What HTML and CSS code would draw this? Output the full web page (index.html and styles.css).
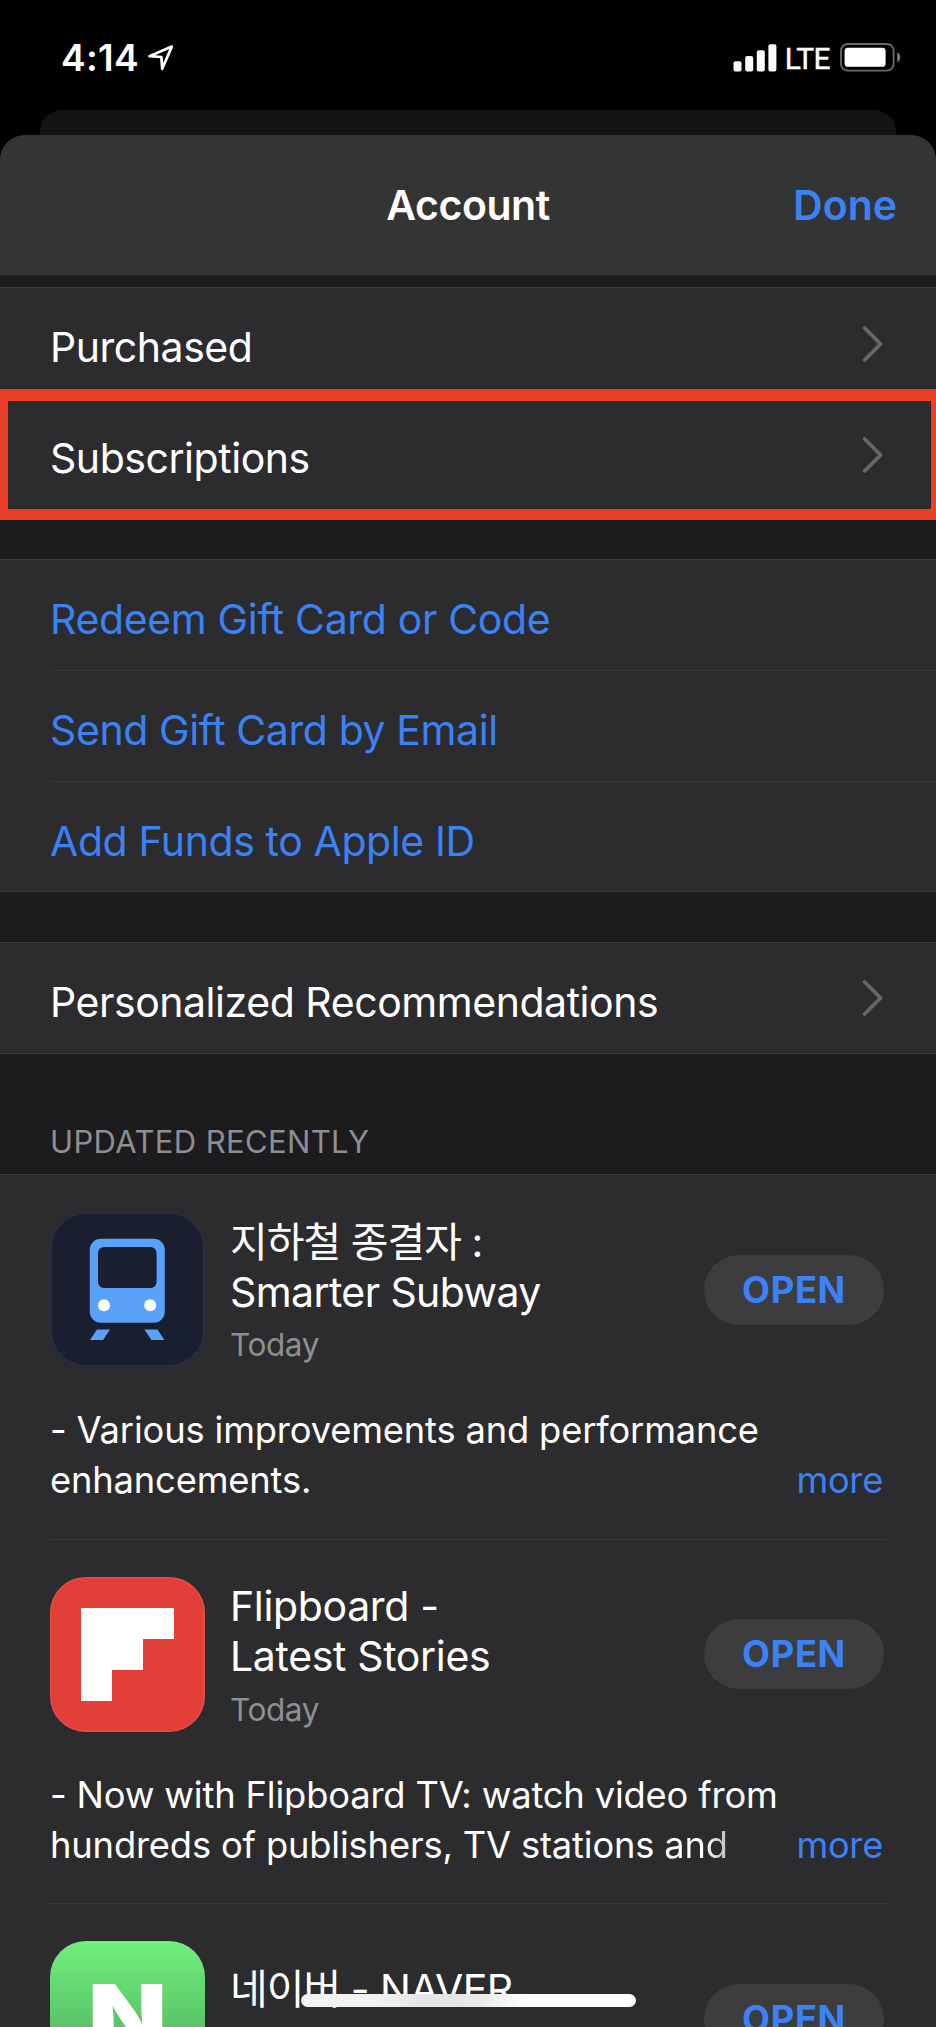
FILE: index.html
```
<!DOCTYPE html>
<html lang="en">
<head>
<meta charset="utf-8">
<title>Account</title>
<link rel="stylesheet" href="styles.css">
</head>
<body>
<div class="phone">
  <div class="status">
    <div class="status-left">
      <span class="time">4:14</span>
      <svg class="location" width="26" height="26" viewBox="0 0 26 26"><path d="M1.5 11.2 23.8 1.6 14.2 23.8 13.4 12Z" fill="none" stroke="#fff" stroke-width="2.7" stroke-linejoin="round"/></svg>
    </div>
    <div class="status-right">
      <svg width="44" height="28" viewBox="0 0 44 28" fill="#fff"><rect x="0.5" y="17.3" width="8" height="10.2" rx="2"/><rect x="12.2" y="12" width="8" height="15.5" rx="2"/><rect x="23.8" y="6.3" width="8" height="21.2" rx="2"/><rect x="35.4" y="0.3" width="8" height="27.2" rx="2"/></svg>
      <span class="network">LTE</span>
      <svg width="61" height="29" viewBox="0 0 61 29"><rect x="1" y="1" width="52.6" height="26.6" rx="6.6" fill="none" stroke="#6a6a6a" stroke-width="1.8"/><rect x="4.6" y="4.8" width="41" height="19" rx="3.4" fill="#fff"/><path d="M57.2 9.3q3 1.6 3 5t-3 5Z" fill="#7a7a7a"/></svg>
    </div>
  </div>
  <div class="card-behind"></div>
  <div class="sheet">
    <header class="nav">
      <span></span>
      <h1>Account</h1>
      <a class="done">Done</a>
    </header>

    <section class="group group-first">
      <div class="row plain"><span>Purchased</span><svg class="chevron" viewBox="0 0 22 38"><path d="M2.6 3 18.6 19 2.6 35"/></svg></div>
      <div class="row plain marked"><span>Subscriptions</span><svg class="chevron" viewBox="0 0 22 38"><path d="M2.6 3 18.6 19 2.6 35"/></svg></div>
    </section>

    <section class="group links">
      <div class="row redeem"><span>Redeem Gift Card or Code</span></div>
      <div class="row"><span>Send Gift Card by Email</span></div>
      <div class="row"><span>Add Funds to Apple ID</span></div>
    </section>

    <section class="group">
      <div class="row"><span>Personalized Recommendations</span><svg class="chevron" viewBox="0 0 22 38"><path d="M2.6 3 18.6 19 2.6 35"/></svg></div>
    </section>

    <h2>UPDATED RECENTLY</h2>

    <section class="apps">
      <article class="app">
        <div class="app-head">
          <svg class="icon" viewBox="0 0 155 155">
            <rect x="1" y="1" width="153" height="153" rx="35" fill="#191f2e" stroke="#282e40" stroke-width="2"/>
            <rect x="39.8" y="26.8" width="75" height="84" rx="11" fill="#5aa2f9"/>
            <rect x="48" y="35" width="58.6" height="41" rx="6" fill="#191f2e"/>
            <circle cx="54" cy="93.3" r="6" fill="#fff"/><circle cx="100.2" cy="93.3" r="6" fill="#fff"/>
            <path d="M47 117.6h13L53 128H40ZM94.4 117.6h13l7 10.4h-13Z" fill="#5aa2f9"/>
          </svg>
          <div class="info">
            <h3><span class="ko">지하철 종결자 :</span><br><span class="tight">Smarter Subway</span></h3>
            <p class="date">Today</p>
          </div>
          <button>OPEN</button>
        </div>
        <div class="notes">
          <p>- Various improvements and performance<br>enhancements.</p>
          <a>more</a>
        </div>
      </article>

      <article class="app">
        <div class="app-head">
          <svg class="icon" viewBox="0 0 155 155">
            <rect x="0.8" y="0.8" width="153.4" height="153.4" rx="35" fill="#e13f37" stroke="#e34f48" stroke-width="1.6"/>
            <g fill="#fff" shape-rendering="crispEdges"><rect x="31" y="31" width="31" height="93"/><rect x="31" y="31" width="93" height="31"/><rect x="31" y="31" width="62" height="62"/></g>
          </svg>
          <div class="info">
            <h3>Flipboard -<br>Latest Stories</h3>
            <p class="date">Today</p>
          </div>
          <button>OPEN</button>
        </div>
        <div class="notes">
          <p>- Now with Flipboard TV: watch video from<br>hundreds of publishers, TV stations <span class="fade">and</span></p>
          <a>more</a>
        </div>
      </article>

      <article class="app">
        <div class="app-head">
          <svg class="icon" viewBox="0 0 155 155">
            <defs><linearGradient id="green" x1="0" y1="0" x2="0" y2="1"><stop offset="0" stop-color="#70f07d"/><stop offset="0.55" stop-color="#5bc468"/><stop offset="1" stop-color="#4bab5a"/></linearGradient></defs>
            <rect width="155" height="155" rx="36" fill="url(#green)"/>
            <text class="naver" x="38" y="105" textLength="79" lengthAdjust="spacingAndGlyphs">N</text>
          </svg>
          <div class="info single">
            <h3><span class="ko">네이버 </span><span class="tight">- NAVER</span></h3>
          </div>
          <button>OPEN</button>
        </div>
      </article>
    </section>
  </div>
  <div class="home-indicator"></div>
</div>
</body>
</html>
```
FILE: styles.css
```
*, *::after { box-sizing: border-box; }

body {
  margin: 0;
  background: #000;
  color: #fff;
  font-family: Inter, "Noto Sans CJK KR", sans-serif;
}

h1, h2, h3, p { margin: 0; font-weight: 400; }

.phone {
  position: relative;
  width: 936px;
  height: 2027px;
  overflow: hidden;
}

/* Status bar */
.status {
  display: flex;
  justify-content: space-between;
  align-items: center;
  height: 110px;
  padding: 5px 35px 0 61px;
}
.status-left, .status-right { display: flex; align-items: center; }
.time { font-size: 37px; font-weight: 600; letter-spacing: 0.3px; }
.location { margin-left: 9px; }
.network {
  margin: 0 10px 0 8px;
  padding-top: 2px;
  font-family: Roboto, sans-serif;
  font-size: 30px;
  font-weight: 400;
  letter-spacing: -0.6px;
  -webkit-text-stroke: 0.4px #fff;
}

/* Sheets */
.card-behind {
  height: 25px;
  margin: 0 40px;
  border-radius: 22px 22px 0 0;
  background: #141414;
}
.sheet {
  height: 1892px;
  border-radius: 25px 25px 0 0;
  background: #1c1c1e;
  overflow: hidden;
}
.nav {
  display: grid;
  grid-template-columns: 1fr auto 1fr;
  align-items: center;
  height: 141px;
  padding: 0 39px;
  border-bottom: 1px solid #29292b;
  background: #343434;
  font-size: 41px;
}
.nav h1 { font-size: 41px; font-weight: 600; letter-spacing: -0.44px; }
.done { justify-self: end; color: #3b82f7; font-weight: 600; }

/* Grouped rows */
.group {
  margin-top: 50px;
  border-top: 1px solid #3d3d3f;
  border-bottom: 1px solid #3b3b3d;
  background: #2c2c2e;
}
.group-first { margin-top: 11px; border-bottom: 0; }
.row {
  position: relative;
  display: flex;
  justify-content: space-between;
  align-items: center;
  height: 110px;
  margin-left: 50px;
  padding-right: 52px;
  font-size: 41px;
  line-height: 50px;
  letter-spacing: -0.45px;
}
.row span { padding-top: 7px; }
.plain { height: 111px; }
.links { color: #3b82f7; letter-spacing: -0.4px; }
.links .row + .row { border-top: 1px solid #39393b; letter-spacing: -0.4px; }
.links .row:nth-child(2) { height: 111px; }
.links .row:nth-child(n + 2) span { padding-top: 8px; }
.redeem { letter-spacing: -0.35px; }
.chevron {
  width: 22px;
  height: 38px;
  fill: none;
  stroke: #67676a;
  stroke-width: 3.8;
  stroke-linecap: round;
  stroke-linejoin: round;
}
.marked::after {
  content: "";
  position: absolute;
  top: -10px;
  left: -50px;
  width: 936px;
  height: 131px;
  border: solid #ea4025;
  border-width: 12px 5px 11px 8px;
}
.group-first + .group { margin-top: 49px; }

h2 {
  height: 120px;
  padding: 69px 0 0 50px;
  color: #8e8e93;
  font-size: 31px;
  line-height: 38px;
  letter-spacing: 0.37px;
}

/* App updates */
.apps { border-top: 1px solid #3a3a3c; background: #2c2c2e; }
.app { margin: 0 50px; padding: 37px 0 33.5px; }
.app + .app { border-top: 1px solid #3a3a3c; }
.app-head { display: flex; align-items: center; padding-right: 2px; }
.icon { flex: none; width: 155px; height: 155px; }
.info { flex: 1; padding: 2px 0 0 25px; }
.single { padding: 0 0 59px 25px; }
h3 { font-size: 41px; line-height: 50px; letter-spacing: -0.35px; white-space: nowrap; }
.ko { letter-spacing: -1px; }
.tight { letter-spacing: -0.6px; }
.date {
  margin-top: 9.5px;
  color: #8e8e93;
  font-size: 31.5px;
  line-height: 38px;
  letter-spacing: -0.4px;
}
button {
  width: 180px;
  height: 70px;
  padding: 0;
  border: 0;
  border-radius: 35px;
  background: #3d3d3f;
  color: #3b82f7;
  font: 700 36.3px Inter, sans-serif;
  letter-spacing: 0.66px;
}
.notes {
  display: flex;
  justify-content: space-between;
  align-items: flex-end;
  margin-top: 38px;
  padding-right: 3px;
  font-size: 36.3px;
  line-height: 50px;
  letter-spacing: -0.16px;
  white-space: nowrap;
}
.notes a { color: #3b82f7; letter-spacing: -0.3px; }
.fade {
  background: linear-gradient(90deg, #fff 60%, #bcbcbd);
  -webkit-background-clip: text;
  background-clip: text;
  color: transparent;
}
.naver { fill: #fff; font: 900 85px Inter, sans-serif; }

.home-indicator {
  position: absolute;
  left: 301px;
  top: 1994px;
  width: 335px;
  height: 13px;
  border-radius: 7px;
  background: linear-gradient(90deg, #f2f2f2 22%, #e4e4e4 38%, #e8e8e8 52%, #fff 68%);
}
```
